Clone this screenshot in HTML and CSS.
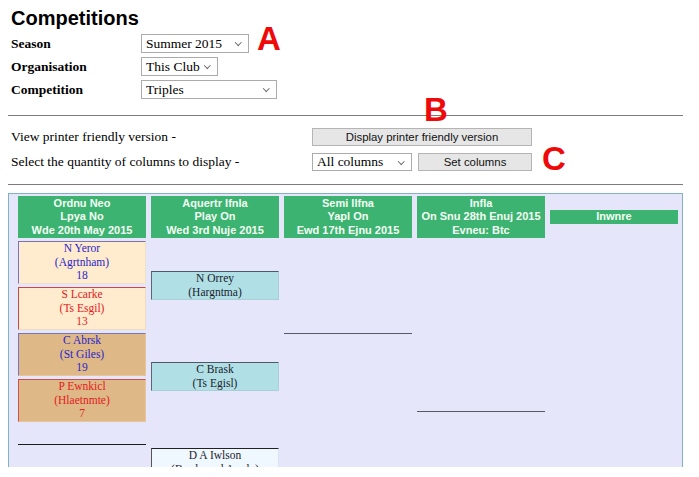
FILE: index.html
```html
<!DOCTYPE html>
<html lang="en">
<head>
<meta charset="utf-8">
<title>Competitions</title>
<link rel="stylesheet" href="styles.css">
</head>
<body>
<div class="page">
  <h1 class="title">Competitions</h1>

  <div class="filters">
    <span class="flabel">Season</span>
    <span class="selwrap"><select class="sel sel-season"><option>Summer 2015</option></select></span>
    <span class="flabel">Organisation</span>
    <span class="selwrap"><select class="sel sel-org"><option>This Club</option></select></span>
    <span class="flabel">Competition</span>
    <span class="selwrap"><select class="sel sel-comp"><option>Triples</option></select></span>
  </div>

  <div class="rule rule-top"></div>

  <div class="actions">
    <span class="alabel">View printer friendly version -</span>
    <div class="actl"><button class="btn btn-print">Display printer friendly version</button></div>
    <span class="alabel">Select the quantity of columns to display -</span>
    <div class="actl colctl">
      <span class="selwrap"><select class="sel sel-cols"><option>All columns</option></select></span>
      <button class="btn btn-set">Set columns</button>
    </div>
  </div>

  <div class="rule rule-bottom"></div>

  <div class="bracket">
    <div class="heads">
      <div class="head">Ordnu Neo<br>Lpya No<br>Wde 20th May 2015</div>
      <div class="head">Aquertr Ifnla<br>Play On<br>Wed 3rd Nuje 2015</div>
      <div class="head">Semi Ilfna<br>Yapl On<br>Ewd 17th Ejnu 2015</div>
      <div class="head">Infla<br>On Snu 28th Enuj 2015<br>Evneu: Btc</div>
      <div class="head">Inwnre</div>
    </div>
    <div class="rounds">
      <div class="round r1">
        <div class="box home blue">N Yeror<br>(Agrtnham)<br>18</div>
        <div class="box home red">S Lcarke<br>(Ts Esgil)<br>13</div>
        <div class="box away blue">C Abrsk<br>(St Giles)<br>19</div>
        <div class="box away red">P Ewnkicl<br>(Hlaetnmte)<br>7</div>
        <div class="slot slot-r1"></div>
      </div>
      <div class="round r2">
        <div class="box tie tie-1">N Orrey<br>(Hargntma)</div>
        <div class="box tie tie-2">C Brask<br>(Ts Egisl)</div>
        <div class="box pending tie-3">D A Iwlson<br>(Brndnamd Anrdo)</div>
      </div>
      <div class="round r3">
        <div class="slot slot-r3"></div>
      </div>
      <div class="round r4">
        <div class="slot slot-r4"></div>
      </div>
      <div class="round r5"></div>
    </div>
  </div>

  <span class="mark mark-a">A</span>
  <span class="mark mark-b">B</span>
  <span class="mark mark-c">C</span>
</div>
</body>
</html>
```

FILE: styles.css
```css
html, body {
  background: #ffffff;
}
body {
  margin: 8px;
  font-family: "Liberation Serif", "Times New Roman", serif;
  font-size: 13.5px;
  color: #000;
}
.page {
  position: relative;
  width: 675px;
}
.title {
  margin: 0;
  font-family: "Liberation Sans", Arial, sans-serif;
  font-size: 20px;
  line-height: 20px;
  font-weight: bold;
  padding-left: 3px;
}

/* filter form */
.filters {
  margin-top: 4px;
  padding-left: 3px;
  display: grid;
  grid-template-columns: 130px auto;
  grid-auto-rows: 23px;
  align-items: center;
  justify-items: start;
}
.flabel {
  font-weight: bold;
  font-size: 13.5px;
}
.selwrap {
  position: relative;
  display: inline-flex;
}
.selwrap::after {
  content: "";
  position: absolute;
  right: 9px;
  top: 6px;
  width: 3.5px;
  height: 3.5px;
  border-right: 1px solid #6a6a6a;
  border-bottom: 1px solid #6a6a6a;
  transform: rotate(45deg);
  pointer-events: none;
}
.sel {
  -webkit-appearance: none;
  appearance: none;
  font-family: "Liberation Serif", "Times New Roman", serif;
  font-size: 13.5px;
  line-height: 17px;
  height: 19px;
  padding: 0 0 0 4px;
  border: 1px solid #ababab;
  border-radius: 0;
  background-color: #fff;
  color: #000;
}
.sel-season { width: 108px; }
.sel-org { width: 77px; }
.sel-comp { width: 136px; }

.rule {
  height: 0;
  border-top: 1px solid #7c7c7c;
}
.rule-top { margin-top: 14px; }
.rule-bottom { margin-top: 9.5px; }

/* actions */
.actions {
  margin-top: 8.5px;
  padding-left: 3px;
  display: grid;
  grid-template-columns: 301px auto;
  grid-auto-rows: 25px;
  align-items: center;
}
.alabel {
  font-size: 13.5px;
}
.actl {
  display: flex;
  align-items: center;
}
.colctl {
  gap: 6px;
}
.colctl .selwrap::after {
  top: 5.5px;
}
.btn {
  font-family: "Liberation Sans", Arial, sans-serif;
  font-size: 11.4px;
  height: 18px;
  padding: 0;
  color: #111;
  background: #e6e6e6;
  border: 1px solid #b4b4b4;
  border-radius: 0;
}
.btn-print { width: 220px; }
.btn-set { width: 114px; }
.sel-cols {
  width: 100px;
  height: 18px;
  line-height: 16px;
}

/* bracket */
.bracket {
  margin-top: 8px;
  box-sizing: border-box;
  height: 274px;
  overflow: hidden;
  background: #e6e6fa;
  border: 1px solid #7fb3bd;
  border-bottom: 0;
  padding: 2px 0 0 9px;
}
.heads,
.rounds {
  display: grid;
  grid-template-columns: repeat(5, 128px);
  column-gap: 5px;
}
.heads {
  align-items: center;
}
.rounds {
  align-items: start;
}
.head {
  background: #3cb371;
  color: #f4fff4;
  font-family: "Liberation Sans", Arial, sans-serif;
  font-weight: bold;
  font-size: 11px;
  line-height: 13.5px;
  text-align: center;
  padding: 0.5px 0;
}
.round {
  display: flex;
  flex-direction: column;
}
.box {
  box-sizing: border-box;
  border: 1px solid;
  text-align: center;
  font-size: 11.5px;
  line-height: 13.5px;
}
.home { background: #ffebcd; }
.away { background: #deb887; }
.blue {
  color: #2a25cc;
  border-color: #7a72bc #efe0cc #efe0cc #7a72bc;
}
.red {
  color: #e3201e;
  border-color: #c84848 #f2d9c4 #f2d9c4 #c84848;
}
.away.blue { border-color: #7a72bc #e4c49a #e4c49a #7a72bc; }
.away.red { border-color: #cc5050 #e8c49c #e8c49c #cc5050; }
.r1 .box { margin-top: 3.5px; }
.slot-r1 {
  height: 22.5px;
  border-bottom: 1px solid #1c1c1c;
}
.tie {
  background: #b0e0e6;
  color: #1c1c2c;
  border-color: #4e5866 #a8d0d6 #a8d0d6 #5a6674;
}
.pending {
  background: #f0f8ff;
  color: #1c1c2c;
  border-color: #222 #d8e4ee #d8e4ee #555;
}
.tie-1 { margin-top: 33.5px; }
.tie-2 { margin-top: 62px; }
.tie-3 { margin-top: 57px; }
.slot-r3 {
  height: 95.5px;
  border-bottom: 1.5px solid #5a5a66;
}
.slot-r4 {
  height: 173.5px;
  border-bottom: 1.5px solid #5a5a66;
}

/* annotation letters */
.mark {
  position: absolute;
  font-family: "Liberation Sans", Arial, sans-serif;
  font-weight: bold;
  font-size: 33px;
  line-height: 33px;
  color: #ee0a0a;
}
.mark-a { top: 13.7px; left: 249px; }
.mark-b { top: 84.7px; left: 416px; }
.mark-c { top: 133.7px; left: 534px; }
```
